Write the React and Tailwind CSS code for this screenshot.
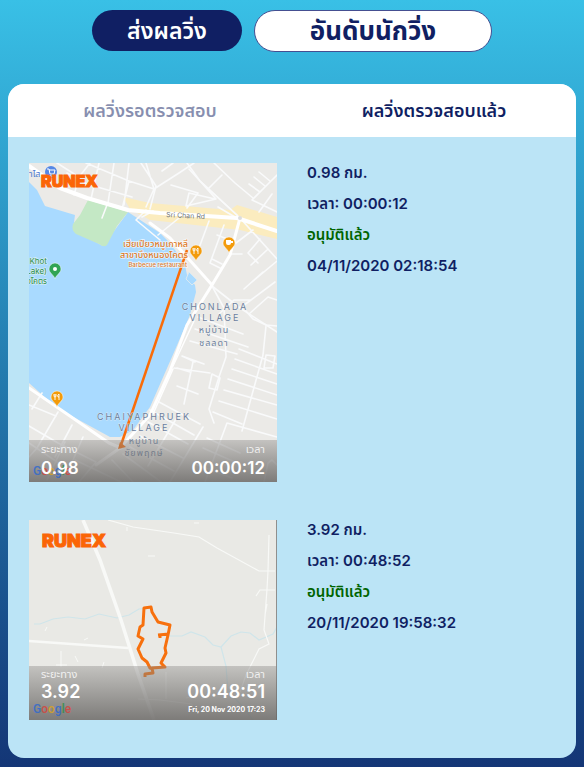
const SANS = "font-['Inter','Noto_Sans_Thai','Noto_Sans',sans-serif]";

function GoogleMark() {
  return (
    <div className="absolute bottom-[3px] left-1 font-['Roboto',sans-serif] text-[12px] leading-4 font-medium opacity-80">
      <span className="text-[#2f69d0]">G</span>
      <span className="text-[#d8433b]">o</span>
      <span className="text-[#dba520]">o</span>
      <span className="text-[#2f69d0]">g</span>
      <span className="text-[#2c9147]">l</span>
      <span className="text-[#d8433b]">e</span>
    </div>
  );
}

function Pin({ x, y, color, children }) {
  return (
    <g transform={`translate(${x} ${y})`}>
      <path d="M0 10C-1 6-6 4-6 0A6 6 0 0 1 6 0C6 4 1 6 0 10Z" fill={color} stroke="#fff" strokeWidth=".5" />
      {children}
    </g>
  );
}

function Fork() {
  return <path d="M-3-3V-1Q-3 0-2 0V3M-1-3V-1Q-1 0-2 0M-2-3V0M2 3V-3Q0-2 1 0H2" fill="none" stroke="#fff" strokeWidth=".9" />;
}

function LakeMap() {
  return (
    <svg viewBox="0 0 248 319" className="block w-full" role="img" aria-label="เส้นทางวิ่ง 0.98 กม.">
      <rect width="248" height="319" fill="#ebeae7" />
      <path d="M94 34 121 40 201 47 208 42 248 54V76L211 67 121 57 101 46Z" fill="#fbecbf" />
      <path d="M0 19 8 27 16 43 46 52 44 67 74 83 99 49 131 70 138 77 146 87 156 102 158 112 166 122 167 129 161 152 146 187 121 244 104 267 91 274 81 274 28 245 0 220Z" fill="#a9daff" />
      <path d="M160 109 168 117 163 122 157 116Z" fill="#a9daff" stroke="#d9e9f2" />
      <path d="M51 52 59 37 99 49 88 63 78 82Q75 85 70 81L47 71Q42 67 44 61Z" fill="#c4e8c5" />
      <g fill="none" stroke="#fff" strokeLinejoin="round" strokeLinecap="round">
        <g strokeWidth="1.6" stroke="#f9fafb">
          <path d="M28 0 50 14 45 32M50 14 61 0M57 0 100 18 93 46M70 0 62 36M85 0 79 40M100 0 95 42M38 10 58 21 103 34M78 42 73 55M100 18 125 26 117 44M112 0 127 23 121 46M125 26 150 10 165 0M125 26 117 0M133 8 144 0" />
          <path d="M117 47 107 57 131 77M113 54 124 48M150 55 129 72M158 0 171 18 187 36 157 43 160 30 186 36M171 18 208 52M158 45 169 30 142 22M180 25 193 12M185 0 206 20 224 35" />
          <path d="M160 6 171 18 211 55M223 37 240 20 248 12M231 29 220 21M236 23 225 14M241 18 230 9M223 37 248 49M230 49 243 31M211 57 189 44M180 58 170 85M195 62 181 100 193 106M188 72 206 79M202 91H213M183 96 193 101" />
          <path d="M211 55 248 96M224 67 207 80M231 76 219 90 229 100M238 87 222 102M248 98 223 119M234 109 215 126M246 119 222 137 205 137M183 123 211 145 248 169M205 137 190 151M211 145 222 137M220 151 239 134 248 137" />
          <path d="M216 147 224 156 237 162 248 163M183 123 195 145 197 194 190 214 180 246 185 260M237 163 234 192 213 268M169 154 214 171M166 166 219 184M161 178 208 191M153 193 175 201M145 205 181 210M153 193 166 199M164 199 155 241M148 223 169 231M148 205 161 209" />
          <path d="M210 186 248 201M206 196 248 211M203 206 248 221M199 216 248 232M195 227 248 242M190 238 248 256M184 249 213 261M237 192 246 193 244 205 235 205ZM183 211 191 215 188 227 180 225ZM198 260 248 274M198 260 176 319" />
          <path d="M174 264 141 319M150 251 119 303M130 239 171 261M121 247 165 272M119 259 159 281M111 273 154 295M101 284 145 308M94 291 132 319M83 297 104 319M178 275 211 290M174 285 208 300M166 301 203 315" />
          <path d="M235 319 239 300 243 297 248 302M13 230 3 246M29 249 8 285 0 294M43 262 26 294M27 253 0 242M54 274 41 304M0 263 29 280 67 299M0 280 31 301M36 279 18 317M67 299 50 319M46 297 92 319" />
        </g>
        <path d="M0 3 31 25 58 35 99 47 131 50 208 55 248 68" strokeWidth="4" />
        <path d="M121 60 141 75 183 122M211 55 201 92 183 122 158 162 141 208 121 252 91 285 67 302" strokeWidth="3" />
        <path d="M165 158 144 203M144 206 124 251" strokeWidth="1.5" />
        <path d="M0 225 38 251 80 280 92 285" strokeWidth="3" />
      </g>
      <circle cx="211" cy="55" r="2" fill="#ddd" />
      <path d="M158 87 91 285" fill="none" stroke="#fa6c08" strokeWidth="2.5" />
      <path d="M89 286 91 279 97 284Z" fill="#fa6c08" />

      <circle cx="22" cy="9" r="6" fill="#5487e5" />
      <path d="M18 6H20L21 11H25L26 7H20M21 13H25" fill="none" stroke="#fff" />
      <Pin x={26} y={106} color="#31a455"><circle r="2" fill="#fff" /></Pin>
      <Pin x={167} y={88} color="#f39b0b"><Fork /></Pin>
      <Pin x={200} y={80} color="#f39b0b"><path d="M-3-3H2V0Q2 2 0 2H-1Q-3 2-3 0ZM2-2H4V0H2" fill="#fff" /></Pin>
      <Pin x={28} y={234} color="#f39b0b"><Fork /></Pin>

      <g className={SANS}>
        <text x="0" y="14" fontSize="9" fill="#4f7bd0">าไส</text>
        <text x="137" y="54" fontSize="7" fill="#71767a" transform="rotate(3 137 54)">Sri Chan Rd</text>
        <g fill="#de7a28" stroke="#fff" strokeOpacity=".7" strokeWidth="1.5" paintOrder="stroke" textAnchor="end" fontWeight="500">
          <text x="159" y="84" fontSize="9">เฮียเปียวหมูเกาหลี</text>
          <text x="159" y="95" fontSize="9">สาขาบึงหนองโคตร</text>
          <text x="158" y="104" fontSize="6">Barbecue restaurant</text>
        </g>
        <g fill="#288b50" stroke="#e3f3f3" strokeWidth="1" paintOrder="stroke" textAnchor="end" fontSize="8">
          <text x="18" y="101">Khot</text>
          <text x="18" y="111">Lake)</text>
          <text x="18" y="121">งโคตร</text>
        </g>
        <g fill="#6b7f9e" stroke="#f2f2f0" strokeOpacity=".6" strokeWidth="1" paintOrder="stroke" textAnchor="middle" fontSize="9">
          <g letterSpacing="2">
            <text x="186" y="147">CHONLADA</text>
            <text x="186" y="158">VILLAGE</text>
            <text x="115" y="257">CHAIYAPHRUEK</text>
            <text x="115" y="268">VILLAGE</text>
          </g>
          <g letterSpacing="1">
            <text x="185" y="170">หมู่บ้าน</text>
            <text x="185" y="183">ชลลดา</text>
            <text x="115" y="281">หมู่บ้าน</text>
            <text x="115" y="293">ชัยพฤกษ์</text>
          </g>
        </g>
      </g>
      <text x="12" y="24" fontSize="16" fontWeight="900" fill="#fb6506" stroke="#fb6506" strokeWidth="1" className={SANS}>RUNEX</text>
    </svg>
  );
}

function FieldMap() {
  return (
    <svg viewBox="0 0 248 200" className="block w-full" role="img" aria-label="เส้นทางวิ่ง 3.92 กม.">
      <rect width="248" height="200" fill="#e9e9e5" />
      <g fill="none" stroke="#cfe5ea" strokeWidth="1.2">
        <path d="M5 104H11L24 99 39 97 56 99 70 94 88 98 100 95 110 89 121 88" />
        <path d="M139 116H153L162 112 176 117 184 125 192 127 202 116 212 112 221 113 230 120 244 114 248 107" />
        <path d="M192 127 197 146 199 171 214 187 224 200" />
      </g>
      <g fill="none" stroke="#f8f9f7">
        <path d="M54 0 71 40 92 100 109 154 125 200" strokeWidth="3.5" />
        <path d="M0 121 99 128" strokeWidth="2.5" />
        <path d="M79 0 104 7 145 13 170 17 188 28 230 51H246M240 15 239 51 238 69 235 110 240 124 230 129 217 155 211 172M227 76 231 70H246M238 84 236 95" strokeWidth="1.2" />
        <path d="M32 131V147M27 145H38M46 136 49 142M75 142 73 148M16 111 18 107M55 120 59 118M119 36H126M137 152V179M109 179 131 180 163 184 166 192M172 178H178M165 3H170M98 7V11M157 178 165 176" />
      </g>
      <path
        d="M116 157V154L124 153 123 148 136 147 132 143 137 133 136 128 139 115 141 105 129 102 123 92 122 87 115 88 114 105 111 107 109 116 114 119 109 129 113 138 118 142 121 148 124 149M129 115 140 114M131 118V115"
        fill="none"
        stroke="#f7700d"
        strokeWidth="3"
        strokeLinejoin="round"
      />
      <path d="M247 0H248V200H247Z" fill="#8f8f8d" />
      <text x="13" y="27" fontSize="18" fontWeight="900" fill="#fb6506" stroke="#fb6506" strokeWidth="1" className={SANS}>RUNEX</text>
    </svg>
  );
}

function Overlay({ distance, time, date }) {
  const label = date ? "text-[11px] leading-4 opacity-80" : "text-[11px] leading-[18px] opacity-80";
  const value = date ? "text-[18px] leading-5 font-semibold" : "text-[17px] leading-5 font-semibold";
  return (
    <div className={`absolute inset-x-0 bottom-0 flex justify-between bg-gradient-to-b from-[#8a8886]/40 to-[#6a6866]/85 px-3 text-white ${date ? "h-[54px]" : "h-[42px]"}`}>
      <GoogleMark />
      <div className="relative">
        <div className={label}>ระยะทาง</div>
        <div className={value}>{distance}</div>
      </div>
      <div className="relative text-right">
        <div className={label}>เวลา</div>
        <div className={value}>{time}</div>
        {date && <div className="text-[7px] leading-4 font-bold">{date}</div>}
      </div>
    </div>
  );
}

function Run({ map, overlay, distance, time, stamp }) {
  return (
    <article className="grid grid-cols-2 items-start gap-[30px]">
      <div className="relative overflow-hidden">
        {map}
        <Overlay {...overlay} />
      </div>
      <div className="flex flex-col gap-[11px] text-[15px] leading-5 font-semibold text-[#101f63]">
        <p>{distance} กม.</p>
        <p>เวลา: {time}</p>
        <p className="text-[#006400]">อนุมัติแล้ว</p>
        <p>{stamp}</p>
      </div>
    </article>
  );
}

export default function App() {
  return (
    <main className={`min-h-screen bg-gradient-to-b from-[#39c0e6] to-[#143676] px-2 pt-[10px] pb-[9px] ${SANS}`}>
      <nav className="mb-8 flex items-start justify-center gap-3">
        <button className="h-[41px] w-[150px] rounded-full bg-[#101f63] text-[23px] leading-8 font-semibold text-white">ส่งผลวิ่ง</button>
        <button className="h-[42px] w-[238px] rounded-full border border-[#454f91] bg-white text-[26px] leading-8 font-bold text-[#101f63]">อันดับนักวิ่ง</button>
      </nav>
      <section className="overflow-hidden rounded-2xl bg-[#bbe4f6]">
        <div role="tablist" className="grid h-[53px] grid-cols-2 bg-white text-[18px] font-semibold text-[#101f63]">
          <button role="tab" aria-selected="false" className="opacity-50">ผลวิ่งรอตรวจสอบ</button>
          <button role="tab" aria-selected="true">ผลวิ่งตรวจสอบแล้ว</button>
        </div>
        <div className="flex flex-col gap-[38px] px-[21px] pt-[26px] pb-[38px]">
          <Run map={<LakeMap />} overlay={{ distance: "0.98", time: "00:00:12" }} distance="0.98" time="00:00:12" stamp="04/11/2020 02:18:54" />
          <Run map={<FieldMap />} overlay={{ distance: "3.92", time: "00:48:51", date: "Fri, 20 Nov 2020 17:23" }} distance="3.92" time="00:48:52" stamp="20/11/2020 19:58:32" />
        </div>
      </section>
    </main>
  );
}
